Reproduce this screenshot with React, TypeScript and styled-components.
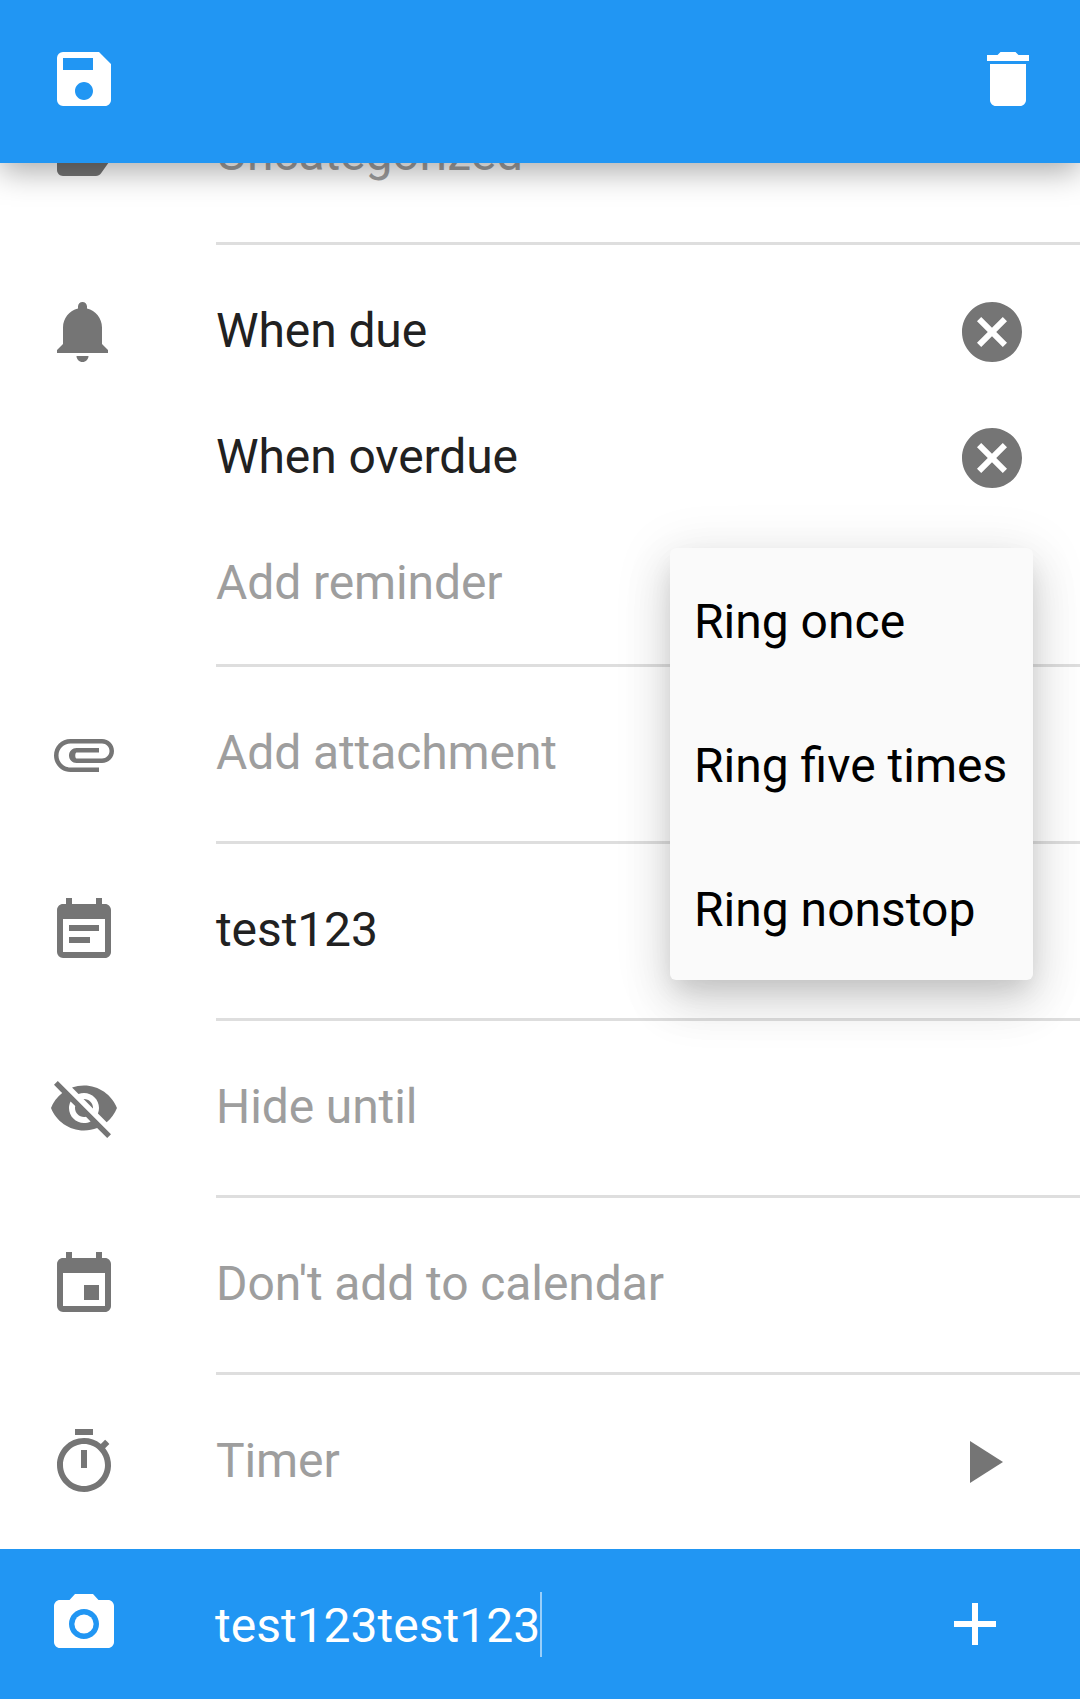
import React from 'react';
import styled, { createGlobalStyle } from 'styled-components';
import {
	MdAdd,
	MdCancel,
	MdDelete,
	MdEvent,
	MdEventNote,
	MdLabel,
	MdOutlineTimer,
	MdPhotoCamera,
	MdPlayArrow,
	MdSave,
	MdVisibilityOff,
} from 'react-icons/md';

const GlobalStyle = createGlobalStyle`
	html, body {
		margin: 0;
		padding: 0;
		background: #fff;
		font-family: Roboto, "Noto Sans", sans-serif;
	}
`;

const Screen = styled.div`
	position: relative;
	display: flex;
	flex-direction: column;
	width: 1080px;
	height: 1699px;
	overflow: hidden;
	background: #fff;
`;

const Toolbar = styled.header`
	position: relative;
	z-index: 2;
	flex: none;
	display: flex;
	justify-content: space-between;
	box-sizing: border-box;
	height: 163px;
	padding: 43px 36px 0 48px;
	background: #2196f3;
	color: #fff;
	box-shadow: 0 8px 30px rgba(0, 0, 0, 0.34);
`;

const Scroller = styled.main`
	flex: 1;
	min-height: 0;
	overflow: hidden;
`;

const ScrollContent = styled.div`
	margin-top: -95px;
`;

const Row = styled.div`
	display: flex;
	align-items: center;
	height: 174px;
`;

const ReminderSection = styled.div`
	display: flex;
	flex-direction: column;
	padding: 24px 0 17px;
`;

const ReminderRow = styled.div`
	display: flex;
	align-items: center;
	height: 126px;
`;

const IconCell = styled.div`
	flex: none;
	display: flex;
	width: 216px;
	padding-left: 48px;
	box-sizing: border-box;
	color: #757575;
`;

const Label = styled.div<{ $hint?: boolean }>`
	flex: 1;
	margin-top: -2px;
	font-size: 48px;
	line-height: 64px;
	letter-spacing: -0.1px;
	color: ${(p) => (p.$hint ? '#9e9e9e' : '#212121')};
`;

const Trailing = styled.div<{ $right: number }>`
	flex: none;
	display: flex;
	margin-right: ${(p) => p.$right}px;
	color: #757575;
`;

const Divider = styled.div`
	height: 3px;
	margin-left: 216px;
	background: #dedede;
`;

const Composer = styled.footer`
	position: relative;
	z-index: 2;
	flex: none;
	display: flex;
	align-items: center;
	height: 150px;
	background: #2196f3;
	color: #fff;
`;

const ComposerIcon = styled.div`
	flex: none;
	display: flex;
	width: 215px;
	padding-left: 48px;
	box-sizing: border-box;
`;

const ComposerInput = styled.div`
	flex: 1;
	display: flex;
	align-items: center;
`;

const ComposerText = styled.span`
	margin-top: 4px;
	font-size: 48px;
	line-height: 64px;
`;

const Caret = styled.span`
	display: block;
	width: 2px;
	height: 65px;
	background: rgba(255, 255, 255, 0.55);
`;

const ComposerAdd = styled.div`
	flex: none;
	display: flex;
	margin-right: 69px;
`;

const Menu = styled.div`
	position: absolute;
	z-index: 1;
	top: 548px;
	left: 670px;
	width: 363px;
	border-radius: 6px;
	background: #fafafa;
	box-shadow:
		0 12px 24px -6px rgba(0, 0, 0, 0.12),
		0 24px 48px 3px rgba(0, 0, 0, 0.1),
		0 9px 54px 8px rgba(0, 0, 0, 0.08);
`;

const MenuItem = styled.div`
	display: flex;
	align-items: center;
	box-sizing: border-box;
	height: 144px;
	padding: 2px 0 0 24px;
	font-size: 48px;
	color: #000;
	white-space: nowrap;
`;

const ICON = 72;

const Bell: React.FC = () => (
	<svg width={ICON} height={ICON} viewBox="0 0 24 24" fill="currentColor">
		<path d="M11.5 22c1.1 0 2-.9 2-2h-4c0 1.1.9 2 2 2zm6.5-6v-5.5c0-3.07-2.13-5.64-5-6.32V3.5c0-.83-.67-1.5-1.5-1.5S10 2.67 10 3.5v.68c-2.87.68-5 3.25-5 6.32V16l-2 2v1h17v-1l-2-2z" />
	</svg>
);

const Paperclip: React.FC = () => (
	<svg width={ICON} height={ICON} viewBox="0 0 24 24" fill="currentColor">
		<path d="M7.5 18C4.46 18 2 15.54 2 12.5S4.46 7 7.5 7H18c2.21 0 4 1.79 4 4s-1.79 4-4 4H9.5C8.12 15 7 13.88 7 12.5S8.12 10 9.5 10H17v1.5H9.5c-.55 0-.55 2 0 2H18c1.38 0 2.5-1.12 2.5-2.5S19.38 8.5 18 8.5H7.5c-2.21 0-4 1.79-4 4s1.79 4 4 4H17V18H7.5z" />
	</svg>
);

const App: React.FC = () => (
	<Screen>
		<GlobalStyle />
		<Toolbar>
			<MdSave size={ICON} />
			<MdDelete size={ICON} />
		</Toolbar>
		<Scroller>
			<ScrollContent>
				<Row>
					<IconCell>
						<MdLabel size={ICON} />
					</IconCell>
					<Label $hint>Uncategorized</Label>
				</Row>
				<Divider />
				<ReminderSection>
					<ReminderRow>
						<IconCell>
							<Bell />
						</IconCell>
						<Label>When due</Label>
						<Trailing $right={52}>
							<MdCancel size={ICON} />
						</Trailing>
					</ReminderRow>
					<ReminderRow>
						<IconCell />
						<Label>When overdue</Label>
						<Trailing $right={52}>
							<MdCancel size={ICON} />
						</Trailing>
					</ReminderRow>
					<ReminderRow>
						<IconCell />
						<Label $hint>Add reminder</Label>
					</ReminderRow>
				</ReminderSection>
				<Divider />
				<Row>
					<IconCell>
						<Paperclip />
					</IconCell>
					<Label $hint>Add attachment</Label>
				</Row>
				<Divider />
				<Row>
					<IconCell>
						<MdEventNote size={ICON} />
					</IconCell>
					<Label>test123</Label>
				</Row>
				<Divider />
				<Row>
					<IconCell>
						<MdVisibilityOff size={ICON} />
					</IconCell>
					<Label $hint>Hide until</Label>
				</Row>
				<Divider />
				<Row>
					<IconCell>
						<MdEvent size={ICON} />
					</IconCell>
					<Label $hint>Don't add to calendar</Label>
				</Row>
				<Divider />
				<Row>
					<IconCell>
						<MdOutlineTimer size={ICON} />
					</IconCell>
					<Label $hint>Timer</Label>
					<Trailing $right={62}>
						<MdPlayArrow size={ICON} />
					</Trailing>
				</Row>
			</ScrollContent>
		</Scroller>
		<Composer>
			<ComposerIcon>
				<MdPhotoCamera size={ICON} />
			</ComposerIcon>
			<ComposerInput>
				<ComposerText>test123test123</ComposerText>
				<Caret />
			</ComposerInput>
			<ComposerAdd>
				<MdAdd size={ICON} />
			</ComposerAdd>
		</Composer>
		<Menu>
			<MenuItem>Ring once</MenuItem>
			<MenuItem>Ring five times</MenuItem>
			<MenuItem>Ring nonstop</MenuItem>
		</Menu>
	</Screen>
);

export default App;
